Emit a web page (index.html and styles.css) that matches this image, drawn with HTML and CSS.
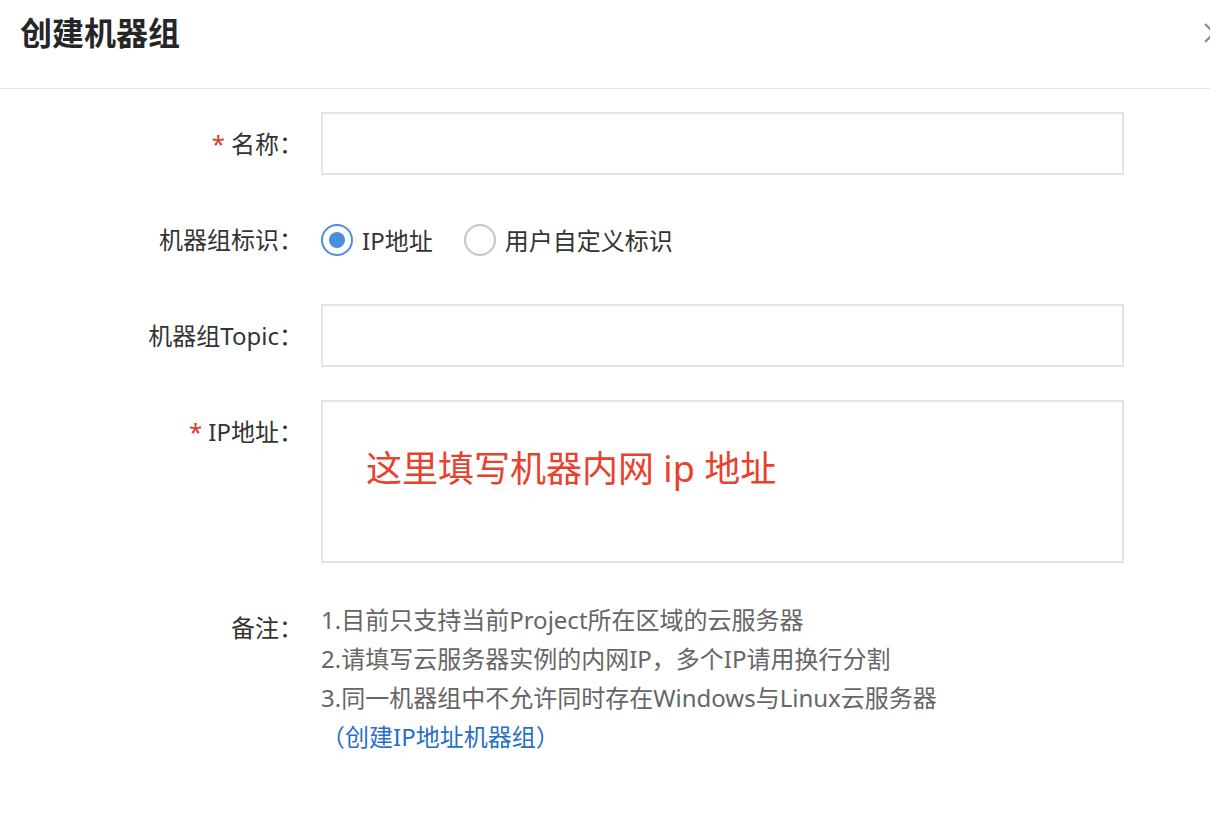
FILE: index.html
```html
<!DOCTYPE html>
<html lang="zh-CN">

<head>
    <meta charset="UTF-8" />
    <meta name="viewport" content="width=device-width, initial-scale=1.0" />
    <title>创建机器组</title>
    <link rel="stylesheet" href="styles.css">
</head>

<body>
    <div class="dialog">
        <header class="dialog-header">
            <h1>创建机器组</h1>
            <button class="close" type="button" aria-label="关闭">
                <svg width="22" height="22" viewBox="0 0 22 22">
                    <path d="M2 2 L20 20 M20 2 L2 20" stroke="#8a8a8a" stroke-width="2.2" fill="none" />
                </svg>
            </button>
        </header>

        <form class="form">
            <div class="row">
                <label class="label" for="name"><span class="req">*</span>名称：</label>
                <input class="field" type="text" id="name" />
            </div>

            <div class="row">
                <span class="label">机器组标识：</span>
                <div class="radios">
                    <label class="radio checked"><span class="dot"></span>IP地址</label>
                    <label class="radio"><span class="dot"></span>用户自定义标识</label>
                </div>
            </div>

            <div class="row">
                <label class="label" for="topic">机器组Topic：</label>
                <input class="field" type="text" id="topic" />
            </div>

            <div class="row top">
                <label class="label"><span class="req">*</span>IP地址：</label>
                <div class="field area">
                    <span class="hint">这里填写机器内网 ip 地址</span>
                </div>
            </div>

            <div class="row top notes-row">
                <span class="label note-label">备注：</span>
                <div class="notes">
                    <p>1.目前只支持当前Project所在区域的云服务器</p>
                    <p>2.请填写云服务器实例的内网IP，多个IP请用换行分割</p>
                    <p>3.同一机器组中不允许同时存在Windows与Linux云服务器</p>
                    <p><a href="#">（创建IP地址机器组）</a></p>
                </div>
            </div>
        </form>
    </div>
</body>

</html>
```

FILE: styles.css
```css
* {
    margin: 0;
    padding: 0;
    box-sizing: border-box;
}

body {
    width: 1210px;
    height: 822px;
    overflow: hidden;
    background-color: #fff;
    font-family: 'Noto Sans', 'Noto Sans CJK SC', sans-serif;
    color: #333;
}

.dialog {
    width: 100%;
    position: relative;
}

.dialog-header {
    height: 89px;
    padding-left: 20px;
    display: flex;
    align-items: center;
    border-bottom: 1px solid #e6e6e6;
}

.dialog-header h1 {
    font-size: 32px;
    font-weight: bold;
    color: #262626;
    margin-top: -26px;
}

.close {
    position: absolute;
    top: 22px;
    left: 1203px;
    width: 22px;
    height: 22px;
    border: none;
    background: none;
}

.form {
    padding-top: 23px;
    display: flex;
    flex-direction: column;
    gap: 33px;
}

.row {
    display: flex;
    align-items: center;
    min-height: 63px;
}

.row.top {
    align-items: flex-start;
}

.label {
    width: 303px;
    text-align: right;
    font-size: 24px;
    line-height: 63px;
    color: #333;
    flex-shrink: 0;
    margin-right: 18px;
}

.req {
    color: #e0352b;
    margin-right: 6px;
}

.field {
    width: 803px;
    height: 63px;
    border: 2px solid #e4e4e4;
    background: #fff;
    font-size: 24px;
    outline: none;
}

.area {
    height: 163px;
    padding: 46px 0 0 43px;
}

.hint {
    font-size: 36px;
    color: #e8412c;
    line-height: 42px;
}

.radios {
    display: flex;
    align-items: center;
    gap: 31px;
}

.radio {
    display: flex;
    align-items: center;
    gap: 9px;
    font-size: 24px;
    color: #333;
}

.radio .dot {
    width: 32px;
    height: 32px;
    border-radius: 50%;
    border: 2px solid #c6c6c6;
    display: flex;
    align-items: center;
    justify-content: center;
}

.radio.checked .dot {
    border-color: #4a8fdb;
}

.radio.checked .dot::after {
    content: '';
    width: 16px;
    height: 16px;
    border-radius: 50%;
    background-color: #4a8fdb;
}

.notes-row {
    margin-top: 4px;
}

.note-label {
    line-height: 39px;
    padding-top: 8px;
}

.notes p {
    font-size: 24px;
    line-height: 39px;
    color: #666;
}

.notes a {
    color: #2a6fc6;
    text-decoration: none;
}
```
